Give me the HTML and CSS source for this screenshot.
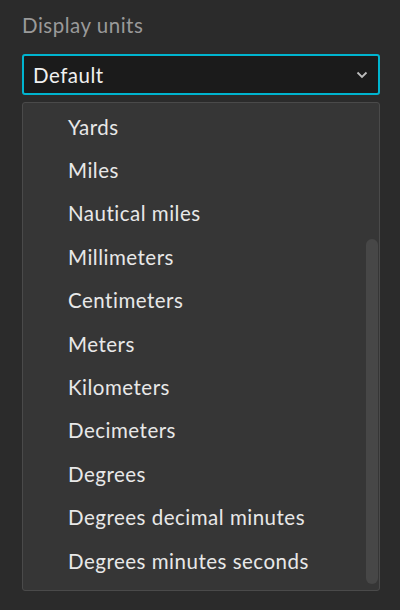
FILE: index.html
```html
<!DOCTYPE html>
<html>
<head>
<meta charset="utf-8">
<link rel="stylesheet" href="styles.css">
</head>
<body>
<div class="panel">
  <div class="label">Display units</div>
  <div class="select">
    <span class="value">Default</span>
    <svg class="chev" width="12" height="8" viewBox="0 0 12 8"><path d="M1.5 1.5 L6 6 L10.5 1.5" fill="none" stroke="#bdbdbd" stroke-width="1.8"/></svg>
  </div>
  <div class="list">
    <ul class="items">
      <li>Yards</li>
      <li>Miles</li>
      <li>Nautical miles</li>
      <li>Millimeters</li>
      <li>Centimeters</li>
      <li>Meters</li>
      <li>Kilometers</li>
      <li>Decimeters</li>
      <li>Degrees</li>
      <li>Degrees decimal minutes</li>
      <li>Degrees minutes seconds</li>
    </ul>
    <div class="track"><div class="thumb"></div></div>
  </div>
</div>
</body>
</html>
```
FILE: styles.css
```css
html, body {
  margin: 0;
  padding: 0;
  background: #2b2b2b;
  height: 610px;
  overflow: hidden;
}
body {
  font-family: Lato, "Noto Sans", sans-serif;
  letter-spacing: 0.5px;
}
.panel {
  padding: 12px 20px 0 22px;
  display: flex;
  flex-direction: column;
}
.label {
  color: #9a9a9a;
  font-size: 20.5px;
  line-height: 26px;
  height: 42px;
}
.select {
  box-sizing: border-box;
  height: 41px;
  width: 358px;
  border: 2px solid #00b4cf;
  border-radius: 3px;
  background: #1b1b1b;
  display: flex;
  align-items: center;
  justify-content: space-between;
  padding: 0 10px 0 9px;
}
.value {
  color: #f0f0f0;
  font-size: 20.5px;
}
.chev {
  margin-top: 1px;
}
.list {
  margin-top: 7px;
  box-sizing: border-box;
  width: 358px;
  height: 489px;
  background: #363636;
  border: 1px solid #4a4a4a;
  border-radius: 3px;
  display: flex;
  overflow: hidden;
}
.items {
  list-style: none;
  margin: 0;
  padding: 2px 0 0 45px;
  flex: 1;
}
.items li {
  height: 43.4px;
  display: flex;
  align-items: center;
  color: #e8e8e8;
  font-size: 20.5px;
}
.track {
  width: 12px;
  margin-right: 1px;
  padding-top: 136px;
  padding-bottom: 6px;
  display: flex;
  flex-direction: column;
}
.thumb {
  flex: 1;
  background: #474747;
  border-radius: 6px;
}
```
